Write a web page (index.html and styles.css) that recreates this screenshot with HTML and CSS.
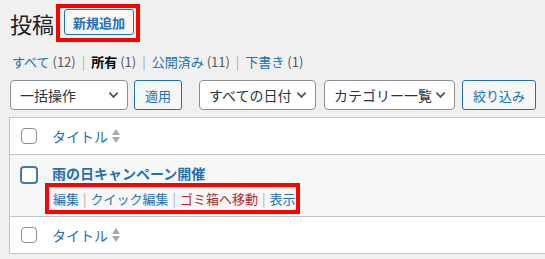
FILE: index.html
```html
<!DOCTYPE html>
<html lang="ja">
<head>
<meta charset="utf-8">
<title>投稿</title>
<link rel="stylesheet" href="styles.css">
</head>
<body>
<div class="wrap">
  <div class="head">
    <h1 class="title">投稿</h1>
    <div class="mark mark-add"><a class="btn-add" href="#">新規追加</a></div>
  </div>
  <ul class="subsubsub">
    <li><a href="#">すべて <span class="count">(12)</span></a><span class="sep">|</span></li>
    <li><a class="current" href="#">所有 <span class="count">(1)</span></a><span class="sep">|</span></li>
    <li><a href="#">公開済み <span class="count">(11)</span></a><span class="sep">|</span></li>
    <li><a href="#">下書き <span class="count">(1)</span></a></li>
  </ul>
  <div class="tablenav">
    <div class="select sel-bulk"><span>一括操作</span><svg class="chev" viewBox="0 0 12 8"><path d="M1.5 1.5 L6 6 L10.5 1.5" fill="none" stroke="#50575e" stroke-width="2"/></svg></div>
    <button class="btn">適用</button>
    <div class="select sel-date"><span>すべての日付</span><svg class="chev" viewBox="0 0 12 8"><path d="M1.5 1.5 L6 6 L10.5 1.5" fill="none" stroke="#50575e" stroke-width="2"/></svg></div>
    <div class="select sel-cat"><span>カテゴリー一覧</span><svg class="chev" viewBox="0 0 12 8"><path d="M1.5 1.5 L6 6 L10.5 1.5" fill="none" stroke="#50575e" stroke-width="2"/></svg></div>
    <button class="btn btn-filter">絞り込み</button>
  </div>
  <div class="table">
    <div class="row row-head">
      <div class="cb-cell"><span class="cb"></span></div>
      <div class="col-title"><a class="sort" href="#">タイトル <span class="arrows"><span class="up"></span><span class="down"></span></span></a></div>
    </div>
    <div class="row row-post">
      <div class="cb-cell"><span class="cb cb-focus"></span></div>
      <div class="col-title">
        <a class="post-title" href="#">雨の日キャンペーン開催</a>
        <div class="mark mark-actions">
          <a href="#">編集</a><span class="sep">|</span><a href="#">クイック編集</a><span class="sep">|</span><a class="trash" href="#">ゴミ箱へ移動</a><span class="sep">|</span><a href="#">表示</a>
        </div>
      </div>
    </div>
    <div class="row row-foot">
      <div class="cb-cell"><span class="cb"></span></div>
      <div class="col-title"><a class="sort" href="#">タイトル <span class="arrows"><span class="up"></span><span class="down"></span></span></a></div>
    </div>
  </div>
</div>
</body>
</html>
```

FILE: styles.css
```css
html, body {
  margin: 0;
  padding: 0;
  background: #f0f0f1;
  overflow: hidden;
}
body {
  font-family: "Noto Sans CJK JP", "Noto Sans", sans-serif;
  color: #3c434a;
  font-size: 13px;
}
a { text-decoration: none; color: #2271b1; }
.wrap {
  padding-left: 10px;
}
.head {
  display: flex;
  align-items: center;
  height: 38px;
  padding-top: 4px;
}
.title {
  margin: 0;
  font-size: 22px;
  font-weight: 400;
  color: #1d2327;
  line-height: 30px;
  margin-right: 2px;
}
.mark {
  border: 4px solid #f00;
  box-sizing: border-box;
}
.mark-add {
  height: 38px;
  padding: 1px 2px 0 4px;
  display: flex;
  align-items: flex-start;
}
.btn-add {
  display: flex;
  align-items: center;
  justify-content: center;
  box-sizing: border-box;
  width: 70px;
  height: 26px;
  border: 1px solid #2271b1;
  border-radius: 3px;
  background: #f6f7f7;
  color: #2271b1;
  font-size: 13px;
  font-weight: 700;
}
.subsubsub {
  list-style: none;
  margin: 10px 0 0;
  padding: 0 0 0 2px;
  display: flex;
  height: 20px;
  line-height: 20px;
  font-size: 13px;
}
.subsubsub .count { color: #50575e; }
.subsubsub .current { color: #000; font-weight: 700; }
.subsubsub .current .count { font-weight: 400; }
.sep {
  color: #a7aaad;
  padding: 0 6px;
}
.tablenav {
  display: flex;
  align-items: center;
  margin-top: 8px;
  height: 30px;
}
.select {
  box-sizing: border-box;
  height: 30px;
  border: 1px solid #8c8f94;
  border-radius: 4px;
  background: #fff;
  display: flex;
  align-items: center;
  justify-content: space-between;
  padding: 0 8px 0 9px;
  font-size: 14px;
  color: #2c3338;
}
.chev { width: 11px; height: 8px; }
.sel-bulk { width: 118px; }
.sel-date { width: 117px; margin-left: 17px; }
.sel-cat { width: 131px; margin-left: 8px; }
.btn {
  box-sizing: border-box;
  height: 30px;
  border: 1px solid #2271b1;
  border-radius: 3px;
  background: #f6f7f7;
  color: #2271b1;
  font-family: inherit;
  font-size: 13px;
  padding: 0;
  width: 48px;
  margin-left: 6px;
}
.btn-filter { width: 74px; margin-left: 7px; }
.table {
  margin-top: 7px;
  margin-left: -1px;
  border: 1px solid #c3c4c7;
  border-right: none;
  background: #fff;
  width: 536px;
  box-sizing: border-box;
}
.row {
  display: flex;
  box-sizing: border-box;
}
.row-head { height: 37px; align-items: center; border-bottom: 1px solid #c3c4c7; }
.row-foot { height: 37px; align-items: center; border-top: 1px solid #c3c4c7; }
.row-post {
  background: #f6f7f7;
  height: 61px;
  padding-top: 8px;
  align-items: flex-start;
}
.cb-cell {
  width: 42px;
  padding-left: 11px;
  box-sizing: border-box;
  display: flex;
}
.cb {
  display: block;
  box-sizing: border-box;
  width: 16px;
  height: 16px;
  border: 1px solid #8c8f94;
  border-radius: 4px;
  background: #fff;
}
.cb-focus {
  width: 18px;
  height: 18px;
  margin-left: -1px;
  margin-top: 3px;
  border: 2px solid #4a77a8;
}
.col-title { display: flex; flex-direction: column; }
.sort {
  font-size: 14px;
  color: #2271b1;
  display: flex;
  align-items: center;
  line-height: 20px;
}
.arrows {
  display: flex;
  flex-direction: column;
  gap: 2px;
  margin-left: 4px;
}
.arrows .up, .arrows .down {
  width: 0;
  height: 0;
  border-left: 4px solid transparent;
  border-right: 4px solid transparent;
}
.arrows .up { border-bottom: 6px solid #a7aaad; }
.arrows .down { border-top: 6px solid #a7aaad; }
.post-title {
  font-size: 14px;
  font-weight: 700;
  line-height: 20px;
  color: #2271b1;
}
.mark-actions {
  margin-left: -7px;
  width: 255px;
  height: 31px;
  padding-left: 4px;
  display: flex;
  align-items: center;
  font-size: 13px;
  white-space: nowrap;
}
.mark-actions .sep { padding: 0 4px; color: #a7aaad; }
.mark-actions .trash { color: #b32d2e; }
```
